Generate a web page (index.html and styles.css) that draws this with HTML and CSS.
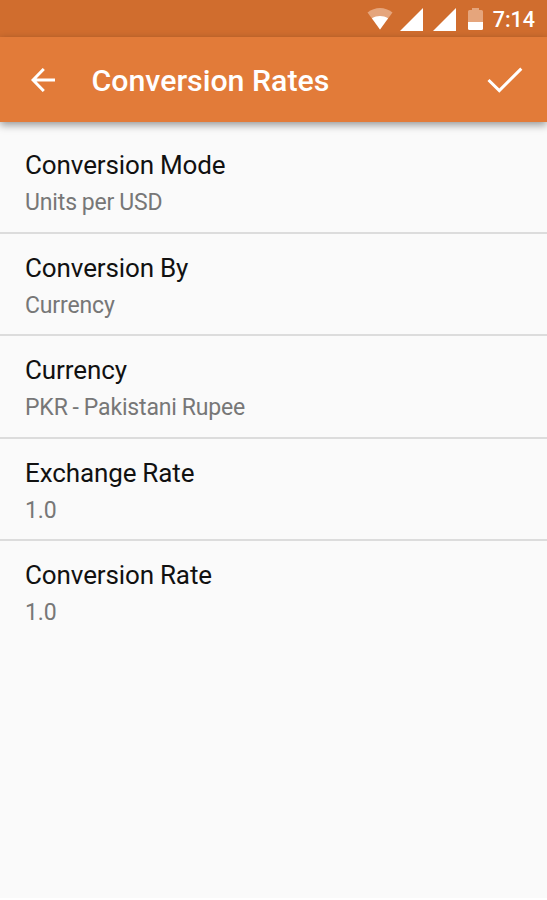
FILE: index.html
```html
<!DOCTYPE html>
<html lang="en">
<head>
    <meta charset="UTF-8">
    <meta name="viewport" content="width=device-width, initial-scale=1.0">
    <title>Conversion Rates</title>
    <link rel="stylesheet" href="styles.css">
</head>
<body>
    <div class="screen">
        <div class="status-bar">
            <svg class="wifi" width="26" height="22" viewBox="0 0 26 22">
                <path d="M0.5 4.5 C8 -1.5 18 -1.5 25.5 4.5 L13 21.5 Z" fill="#e5a57c"/>
                <path d="M4.9 10.3 C10 7.3 16 7.3 21.1 10.3 L13 21.5 Z" fill="#fff"/>
            </svg>
            <svg class="signal" width="23" height="23" viewBox="0 0 23 23">
                <path d="M23 0 V23 H0 Z" fill="#fff"/>
            </svg>
            <svg class="signal" width="23" height="23" viewBox="0 0 23 23">
                <path d="M23 0 V23 H0 Z" fill="#fff"/>
            </svg>
            <svg class="battery" width="15" height="22" viewBox="0 0 15 22">
                <path d="M0 3.5 Q0 2 1.5 2 H4 V0 H11 V2 H13.5 Q15 2 15 3.5 V14 H0 Z" fill="#e5a57c"/>
                <path d="M0 14 H15 V20.5 Q15 22 13.5 22 H1.5 Q0 22 0 20.5 Z" fill="#fff"/>
            </svg>
            <span class="time">7:14</span>
        </div>

        <header class="toolbar">
            <svg class="back" width="24" height="24" viewBox="0 0 24 24">
                <path d="M24 12 H2 M12.8 1 L2 12 L12.8 23" fill="none" stroke="#fff" stroke-width="3"/>
            </svg>
            <h1>Conversion Rates</h1>
            <svg class="done" width="36" height="26" viewBox="0 0 36 26">
                <path d="M1.5 13 L12.3 23.6 L34.3 1.6" fill="none" stroke="#fff" stroke-width="3"/>
            </svg>
        </header>

        <div class="settings">
            <div class="item">
                <h2>Conversion Mode</h2>
                <p>Units per USD</p>
            </div>
            <div class="item">
                <h2>Conversion By</h2>
                <p>Currency</p>
            </div>
            <div class="item">
                <h2>Currency</h2>
                <p>PKR - Pakistani Rupee</p>
            </div>
            <div class="item">
                <h2>Exchange Rate</h2>
                <p>1.0</p>
            </div>
            <div class="item">
                <h2>Conversion Rate</h2>
                <p>1.0</p>
            </div>
        </div>
    </div>
</body>
</html>
```
FILE: styles.css
```css
body {
    font-family: Roboto, sans-serif;
    margin: 0;
    background-color: #ffffff;
}

.screen {
    height: 898px;
    background-color: #fafafa;
    overflow: hidden;
}

/* Status bar */
.status-bar {
    display: flex;
    align-items: flex-start;
    height: 37px;
    box-sizing: border-box;
    padding: 8px 12px 0 0;
    justify-content: flex-end;
    background-color: #d06d2e;
}

.signal {
    margin-left: 7px;
}

.signal + .signal {
    margin-left: 10px;
}

.battery {
    margin-left: 12px;
}

.time {
    margin-left: 10px;
    font-size: 21.5px;
    line-height: 24px;
    font-weight: 500;
    color: #fff;
}

/* Toolbar */
.toolbar {
    display: flex;
    align-items: center;
    height: 85px;
    box-sizing: border-box;
    padding: 0 24px 0 31px;
    background-color: #e27b39;
    box-shadow: 0 3px 8px rgba(0, 0, 0, 0.4);
}

.toolbar h1 {
    flex: 1;
    margin: 1px 0 0 36.5px;
    font-size: 30.3px;
    font-weight: 500;
    color: #fff;
}

/* Settings list */
.settings {
    padding-top: 9px;
}

.item {
    height: 102.5px;
    box-sizing: border-box;
    padding: 17px 25px 0;
    border-bottom: 2px solid #dcdcdc;
}

.item:last-child {
    border-bottom: none;
}

.item h2 {
    margin: 0;
    font-size: 26px;
    line-height: 34px;
    font-weight: 400;
    letter-spacing: -0.1px;
    word-spacing: -0.5px;
    color: #111;
}

.item p {
    margin: 6px 0 0;
    font-size: 23px;
    line-height: 30px;
    letter-spacing: -0.15px;
    word-spacing: -0.6px;
    color: #777;
}
```
